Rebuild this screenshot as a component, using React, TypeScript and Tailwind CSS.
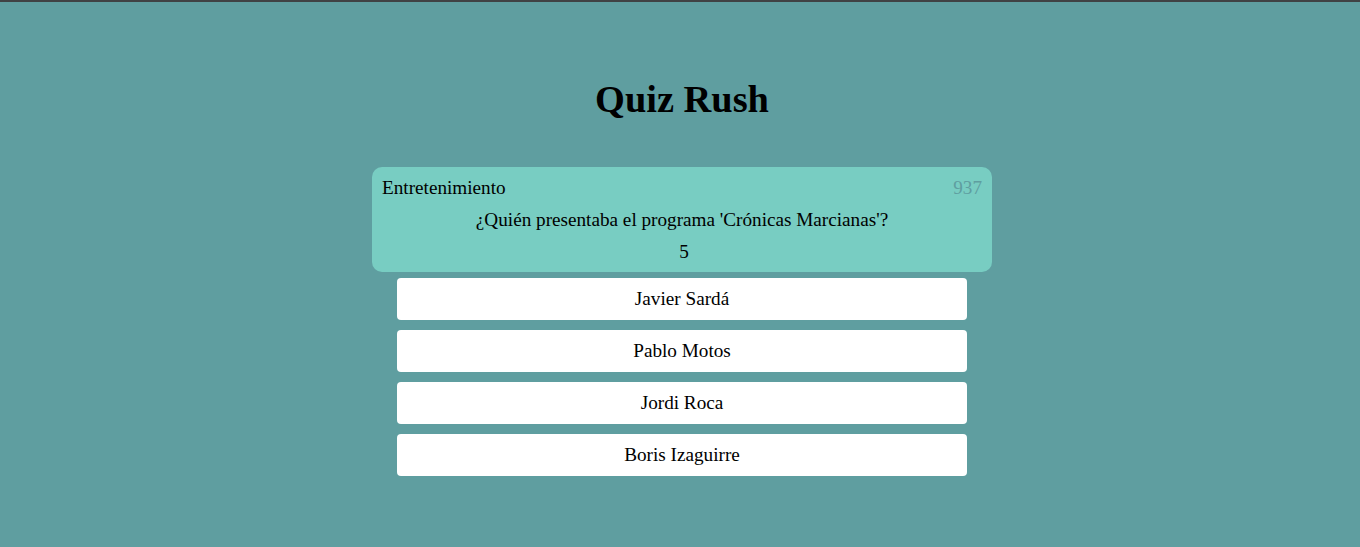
export default function App() {
  const answers = ["Javier Sardá", "Pablo Motos", "Jordi Roca", "Boris Izaguirre"];

  return (
    <div
      className="min-h-[547px] bg-[#5f9ea0] border-t-2 border-[#404244] pl-[4px] flex flex-col items-center text-black"
      style={{ fontFamily: '"Liberation Serif", "Times New Roman", serif' }}
    >
      <h1 className="mt-[75px] h-[44px] leading-[44px] text-[38.4px] font-bold">Quiz Rush</h1>

      <div className="mt-[46px] w-[620px] rounded-[10px] bg-[#78cdc2] px-[10px] pt-[10px] pb-[9px] text-[19.2px]">
        <div className="flex justify-between leading-[22px]">
          <span>Entretenimiento</span>
          <span className="text-[#5f9ea0]">937</span>
        </div>
        <p className="mt-[10px] text-center leading-[22px]">¿Quién presentaba el programa 'Crónicas Marcianas'?</p>
        <p className="mt-[10px] pl-[4px] text-center leading-[22px]">5</p>
      </div>

      <div className="mt-[6px] flex w-[570px] flex-col gap-[10px]">
        {answers.map((a) => (
          <button
            key={a}
            className="h-[42px] w-full rounded-[4px] bg-white text-[19.2px] text-black"
          >
            {a}
          </button>
        ))}
      </div>
    </div>
  );
}
